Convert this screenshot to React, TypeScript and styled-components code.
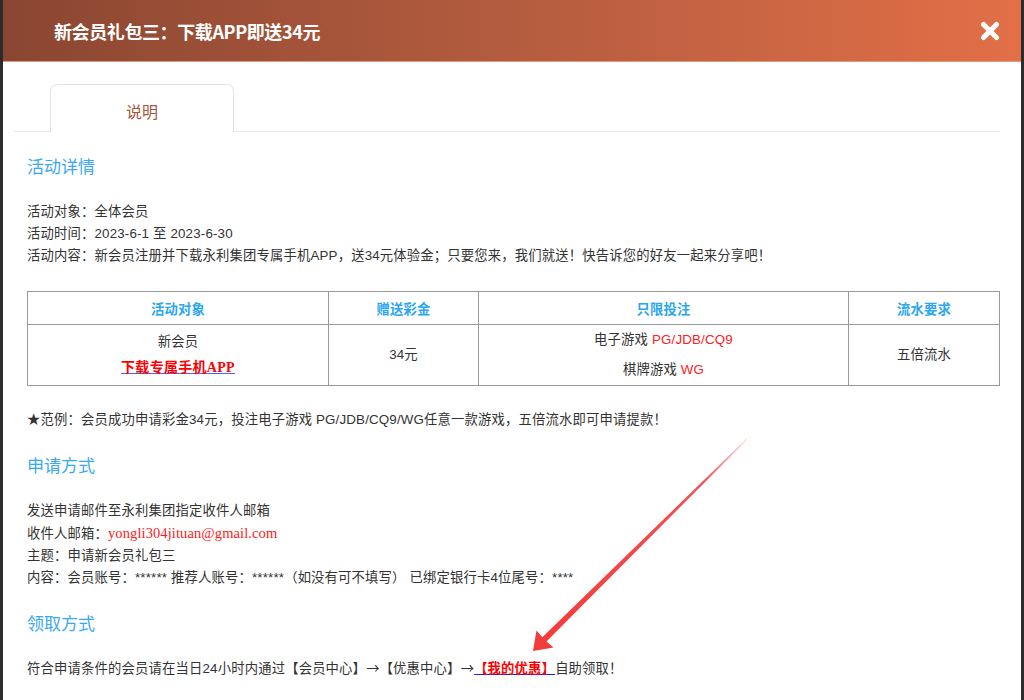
import React from "react";
import styled, { createGlobalStyle } from "styled-components";

const Global = createGlobalStyle`
  html, body { margin: 0; padding: 0; }
  body {
    background: #2d2b2b;
    width: 1024px;
    height: 700px;
    overflow: hidden;
    font-family: "Liberation Sans", "Noto Sans CJK SC", sans-serif;
  }
`;

const Page = styled.div`
  position: relative;
  width: 1024px;
  height: 700px;
  padding: 0 3px;
  box-sizing: border-box;
`;

const Modal = styled.div`
  background: #fff;
  height: 700px;
  overflow: hidden;
`;

const Header = styled.div`
  height: 62px;
  background: linear-gradient(to right, #8a4631 0%, #b45c3f 50%, #e26f47 100%);
  border-bottom: 1px solid #e39a7c;
  box-sizing: border-box;
  display: flex;
  align-items: center;
  justify-content: space-between;
  padding: 0 21px 0 51px;
`;

const Title = styled.h1`
  margin: 0;
  color: #fff;
  font-size: 18px;
  font-weight: 700;
  letter-spacing: -0.4px;
  font-family: "Noto Sans CJK SC", "Liberation Sans", sans-serif;
`;

const CloseButton = styled.button`
  border: 0;
  background: none;
  padding: 0;
  width: 20px;
  height: 20px;
  display: flex;
  cursor: pointer;
`;

const TabBar = styled.div`
  margin: 22px 21px 0 11px;
  padding-left: 36px;
  border-bottom: 1px solid #e8e8e8;
  display: flex;
`;

const Tab = styled.div`
  width: 184px;
  height: 48px;
  box-sizing: border-box;
  margin-bottom: -1px;
  border: 1px solid #e3e3e3;
  border-bottom: 0;
  border-radius: 7px 7px 0 0;
  background: #fff;
  color: #a4573a;
  font-size: 16px;
  font-family: "Noto Sans CJK SC", sans-serif;
  display: flex;
  align-items: center;
  justify-content: center;
  padding-top: 4px;
`;

const Content = styled.div`
  padding: 0 22px 0 24px;
  color: #333;
  font-size: 13.33px;
  letter-spacing: 0.17px;
`;

const Heading = styled.h2`
  margin: 22px 0 0;
  font-size: 17px;
  line-height: 24px;
  font-weight: 400;
  letter-spacing: 0;
  color: #3aa8f3;
  font-family: "Noto Sans CJK SC", sans-serif;
`;

const Lines = styled.div<{ $gap?: number }>`
  margin-top: ${(p) => p.$gap ?? 23}px;
  line-height: 22px;
`;

const Line = styled.p`
  margin: 0;
`;

const Table = styled.table`
  margin-top: 24px;
  width: 972px;
  border-collapse: collapse;
  table-layout: fixed;
  text-align: center;
  font-size: 13.33px;
  color: #333;
`;

const Col = styled.col<{ $w: number }>`
  width: ${(p) => p.$w}px;
`;

const Th = styled.th`
  height: 32px;
  border: 1px solid #9a9a9a;
  color: #2aa6f2;
  font-weight: 700;
  padding: 0;
`;

const Td = styled.td<{ $lh?: number }>`
  border: 1px solid #9a9a9a;
  height: 58px;
  padding: 0;
  line-height: ${(p) => p.$lh ?? 26}px;
`;

const Red = styled.span`
  color: #ff2020;
`;

const SerifLink = styled.a`
  color: #ff0000;
  font-weight: 700;
  font-size: 14px;
  letter-spacing: 0.3px;
  font-family: "Liberation Serif", "Noto Sans CJK SC", serif;
  text-decoration: underline;
  text-decoration-color: #5a5aff;
  cursor: pointer;
`;

const Email = styled.span`
  color: #ff1a1a;
  font-family: "Liberation Serif", serif;
  font-size: 14.5px;
  letter-spacing: 0.1px;
`;

const Arrow = styled.span`
  font-family: "Noto Sans CJK SC", sans-serif;
`;

const BoldLink = styled.a`
  color: #ff0000;
  font-weight: 700;
  text-decoration: underline;
  text-decoration-color: #1c1cff;
  cursor: pointer;
`;

const Overlay = styled.svg`
  position: absolute;
  left: 0;
  top: 0;
  pointer-events: none;
`;

export default function App() {
  return (
    <>
      <Global />
      <Page>
        <Modal>
          <Header>
            <Title>新会员礼包三：下载APP即送34元</Title>
            <CloseButton aria-label="close">
              <svg width="20" height="20" viewBox="0 0 20 20">
                <path d="M3.5 3.5 L16.5 16.5 M16.5 3.5 L3.5 16.5" stroke="#fff" strokeWidth="5" strokeLinecap="round" />
              </svg>
            </CloseButton>
          </Header>
          <TabBar>
            <Tab>说明</Tab>
          </TabBar>
          <Content>
            <Heading>活动详情</Heading>
            <Lines>
              <Line>活动对象：全体会员</Line>
              <Line>活动时间：2023-6-1 至 2023-6-30</Line>
              <Line>活动内容：新会员注册并下载永利集团专属手机APP，送34元体验金；只要您来，我们就送！快告诉您的好友一起来分享吧！</Line>
            </Lines>
            <Table>
              <colgroup>
                <Col $w={301} />
                <Col $w={150} />
                <Col $w={370} />
                <Col $w={151} />
              </colgroup>
              <thead>
                <tr>
                  <Th>活动对象</Th>
                  <Th>赠送彩金</Th>
                  <Th>只限投注</Th>
                  <Th>流水要求</Th>
                </tr>
              </thead>
              <tbody>
                <tr>
                  <Td>
                    <Line>新会员</Line>
                    <Line>
                      <SerifLink>下载专属手机APP</SerifLink>
                    </Line>
                  </Td>
                  <Td>34元</Td>
                  <Td $lh={30}>
                    <Line>
                      电子游戏 <Red>PG/JDB/CQ9</Red>
                    </Line>
                    <Line>
                      棋牌游戏 <Red>WG</Red>
                    </Line>
                  </Td>
                  <Td>五倍流水</Td>
                </tr>
              </tbody>
            </Table>
            <Lines>
              <Line>★范例：会员成功申请彩金34元，投注电子游戏 PG/JDB/CQ9/WG任意一款游戏，五倍流水即可申请提款！</Line>
            </Lines>
            <Heading>申请方式</Heading>
            <Lines>
              <Line>发送申请邮件至永利集团指定收件人邮箱</Line>
              <Line>
                收件人邮箱：<Email>yongli304jituan@gmail.com</Email>
              </Line>
              <Line>主题：申请新会员礼包三</Line>
              <Line>内容：会员账号：****** 推荐人账号：******（如没有可不填写） 已绑定银行卡4位尾号：****</Line>
            </Lines>
            <Heading>领取方式</Heading>
            <Lines $gap={22}>
              <Line>
                符合申请条件的会员请在当日24小时内通过【会员中心】<Arrow>→</Arrow>【优惠中心】<Arrow>→</Arrow>
                <BoldLink>【我的优惠】</BoldLink>自助领取！
              </Line>
            </Lines>
          </Content>
        </Modal>
        <Overlay width="1024" height="700" viewBox="0 0 1024 700">
          <defs>
            <linearGradient id="arrowFade" x1="747" y1="439" x2="533" y2="651" gradientUnits="userSpaceOnUse">
              <stop offset="0" stopColor="#f43c3c" stopOpacity="0.15" />
              <stop offset="0.2" stopColor="#f43c3c" stopOpacity="0.9" />
              <stop offset="1" stopColor="#f43a3a" />
            </linearGradient>
          </defs>
          <polygon
            fill="url(#arrowFade)"
            points="747.4,439.4 546.5,641.5 553.5,647.5 533,651 536.5,630.5 542.3,637.3 746.6,438.6"
          />
        </Overlay>
      </Page>
    </>
  );
}
